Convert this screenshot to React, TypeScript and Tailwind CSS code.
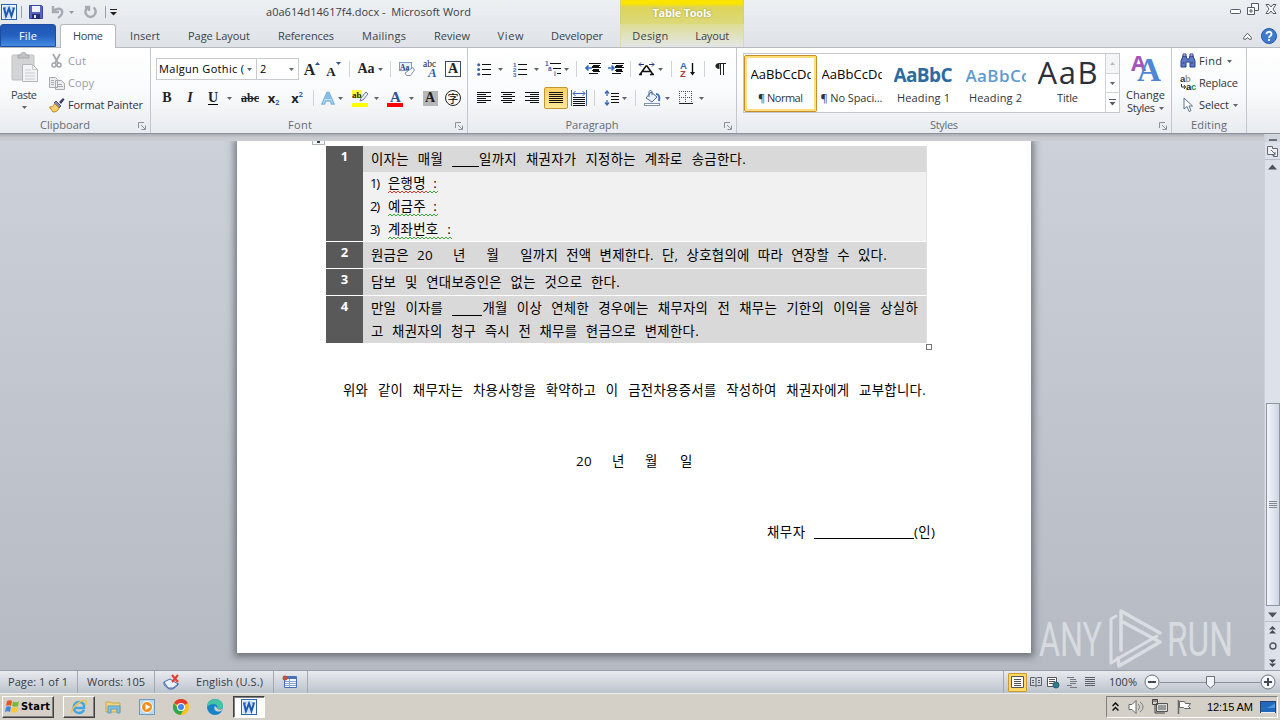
import React, { useLayoutEffect, useRef } from "react";

/* Text set to an exact measure by adjusting letter or word spacing. */
function Fit({ w, className = "", by = "letter", children }: { w: number; className?: string; by?: "letter" | "word"; children: React.ReactNode }) {
  const ref = useRef<HTMLSpanElement>(null);
  useLayoutEffect(() => {
    const el = ref.current;
    if (!el) return;
    el.style.letterSpacing = by === "letter" ? "0px" : "";
    el.style.wordSpacing = "";
    const natural = el.getBoundingClientRect().width;
    const text = el.textContent || "";
    if (by === "word") {
      const n = (text.match(/[ \u00a0]/g) || []).length || 1;
      el.style.wordSpacing = `${(w - natural) / n}px`;
    } else {
      el.style.letterSpacing = `${(w - natural) / Math.max(1, text.length - 1)}px`;
    }
  }, [w, by]);
  return (
    <span className={`inline-block shrink-0 whitespace-pre ${className}`} style={{ width: w }}>
      <span ref={ref} className="inline-block">{children}</span>
    </span>
  );
}

const Arrow = ({ className = "" }: { className?: string }) => (
  <svg className={`shrink-0 ${className}`} width="5" height="3" viewBox="0 0 5 3"><path d="M0 0h5L2.5 3z" fill="#5f646c" /></svg>
);

const Cell = ({ className = "", children }: { className?: string; children?: React.ReactNode }) => (
  <div className={`flex h-[22px] shrink-0 items-center justify-center ${className}`}>{children}</div>
);
const Sep = ({ className = "" }: { className?: string }) => (
  <Cell className={className}><div className="h-4 w-px bg-[#d0d4da]" /></Cell>
);

const I = ({ w = 16, h = 16, children, className = "" }: { w?: number; h?: number; children: React.ReactNode; className?: string }) => (
  <svg className={`shrink-0 ${className}`} width={w} height={h} viewBox={`0 0 ${w} ${h}`} fill="none">{children}</svg>
);

const Launcher = () => (
  <I w={8} h={8}><path d="M.5 6V.5H6M3 3l4 4M7.500 3.500v4h-4" stroke="#8b9099" /></I>
);

function Group({ label, w, lw, className, launcher = true, children }: { label: string; w: number; lw: string; className: string; launcher?: boolean; children: React.ReactNode }) {
  return (
    <section className={`flex h-full shrink-0 flex-col border-r border-[#c3c7cd] ${className}`}>
      <div className="h-[68px] shrink-0">{children}</div>
      <div className="flex h-[17px] shrink-0 items-center text-[11px] text-[#656b76]">
        <div className={`flex justify-center pt-[2px] ${lw}`}><Fit w={w}>{label}</Fit></div>
        {launcher && <div className="ml-auto mr-1 pt-0.5"><Launcher /></div>}
      </div>
    </section>
  );
}

const WordIcon = ({ className = "" }: { className?: string }) => (
  <I className={className}>
    <rect x=".5" y=".5" width="15" height="15" fill="#eef5fd" stroke="#2d62ad" />
    <path d="M2 2h9v12H2z" fill="#cfe1f6" />
    <path d="M3 4l2 8 3-7.500L10.500 12 13 4" stroke="#1c5bb0" strokeWidth="2" />
    <path d="M2 4h3M11 4h3" stroke="#1c5bb0" />
  </I>
);

const lineRows = (rows: number[][]) => rows.map(([x, y, w], i) => <rect key={i} x={x} y={y} width={w} height="1" fill="#111" />);

const Lines = ({ kind }: { kind: "left" | "center" | "right" | "full" }) => {
  const rows = [0, 1, 2, 3, 4, 5].map((i) => {
    const w = kind === "full" ? 14 : i % 2 ? 9 : 14;
    return [kind === "right" ? 14 - w : kind === "center" ? Math.floor((14 - w) / 2) : 0, i * 2, w];
  });
  return <I w={14} h={12}>{lineRows(rows)}</I>;
};

function TitleBar() {
  return (
    <header className="flex h-6 items-center bg-gradient-to-b from-[#edf0f3] to-[#e5e9ed]">
      <div className="flex h-6 w-[200px] items-center pl-[1px]">
        <WordIcon />
        <div className="ml-1 h-3 w-px bg-[#9ba1a9]" />
        <I className="ml-[7px]" w={14} h={14}>
          <path d="M.5.5h12l1 1v12H.5z" fill="#5663c2" stroke="#3c46a0" />
          <path d="M3 1h8v6H3z" fill="#f1f3ff" /><path d="M3 9h8v5H3z" fill="#27306f" /><path d="M5 10h2v3H5z" fill="#e2e6ff" />
        </I>
        <I className="ml-[8px]" w={13} h={14}><path d="M2 1v6h6M2.500 6.500C5 3 10 3 11 6s-1 5-4 7" stroke="#a6abb2" strokeWidth="2.400" /></I>
        <Arrow className="ml-[5px] opacity-60" />
        <I className="ml-[10px]" w={13} h={14}><path d="M9.500 2.500C12 4 12.500 8 10 10.500S3.500 12 2 9s0-5 2-6.500M1 2h4v4" stroke="#a6abb2" strokeWidth="2.400" /></I>
        <div className="ml-[8px] h-3 w-px bg-[#9ba1a9]" />
        <I className="ml-[4px]" w={7} h={8}><path d="M0 1.500h7" stroke="#222" /><path d="M0 4h7L3.500 7.500z" fill="#222" /></I>
      </div>
      <div className="flex w-[420px] pl-[66px] text-[11px] text-[#3b3f47]"><Fit w={205}>a0a614d14617f4.docx -  Microsoft Word</Fit></div>
      <div className="flex h-6 w-[124px] items-center justify-center border-x border-[#d5d36c] bg-[linear-gradient(#fce500_0px,#fbe300_4px,#dcd45a_7px,#dcd97c_100%)] pt-[3px] text-[11px] font-bold text-white [text-shadow:0_0_2px_#8d8a35]">
        <Fit w={59}>Table Tools</Fit>
      </div>
      <div className="ml-auto flex items-center gap-[6px] pb-[6px] pr-[3px]">
        <I w={12} h={12}><rect x="1.500" y="6.500" width="10" height="4" rx="1" fill="#fff" stroke="#565c66" /></I>
        <I w={12} h={12}><path d="M4.500.5h7v7h-7z" fill="#fff" stroke="#565c66" /><path d="M.5 4.500h7v7h-7z" fill="#fff" stroke="#565c66" /><path d="M3 7h2v2H3z" stroke="#565c66" /></I>
        <I w={12} h={12}><path d="M1 1.500h3l2 2.500 2-2.500h3L8 6l3 4.500H8L6 8l-2 2.500H1L4 6z" fill="#fff" stroke="#565c66" /></I>
      </div>
    </header>
  );
}

function Tabs() {
  const tab = "flex h-full items-center justify-center pt-px";
  return (
    <nav className="flex h-6 border-b border-[#b6babf] bg-gradient-to-b from-[#e5e9ed] to-[#dfe3e7] text-[11px] text-[#3d424b]">
      <div className="flex h-[23px] w-14 items-center justify-center rounded-t-[3px] border border-[#1d4da0] bg-gradient-to-b from-[#2056b4] via-[#2560bf] to-[#458be4] pt-px text-white"><Fit w={18}>File</Fit></div>
      <div className="ml-1 flex h-6 w-14 items-center justify-center rounded-t-[3px] border border-b-0 border-[#b6babf] bg-white"><Fit w={30}>Home</Fit></div>
      <div className={`${tab} w-[58px]`}><Fit w={30}>Insert</Fit></div>
      <div className={`${tab} w-[90px]`}><Fit w={62}>Page Layout</Fit></div>
      <div className={`${tab} w-[84px]`}><Fit w={56}>References</Fit></div>
      <div className={`${tab} w-[72px]`}><Fit w={44}>Mailings</Fit></div>
      <div className={`${tab} w-16`}><Fit w={36}>Review</Fit></div>
      <div className={`${tab} w-[53px]`}><Fit w={26}>View</Fit></div>
      <div className={`${tab} w-20`}><Fit w={52}>Developer</Fit></div>
      <div className="ml-[3px] flex h-[23px] w-[124px] border-x border-[#dcdba5] bg-gradient-to-b from-[#dfdd92] to-[#e2e6e6] pt-px">
        <div className="flex w-[61px] items-center justify-center"><Fit w={36}>Design</Fit></div>
        <div className="flex w-[66px] items-center justify-center pl-[2px]"><Fit w={34}>Layout</Fit></div>
      </div>
      <div className="ml-auto flex items-center gap-[9px] pr-[3px]">
        <I w={9} h={8}><path d="M.7 5.500L4.500 1.200l3.800 4.300v1.700H6L4.500 5.500 3 7.200H.7z" fill="#fff" stroke="#5d636d" /></I>
        <I><circle cx="8" cy="8" r="7.500" fill="#3e7bd0" stroke="#2558a8" /><path d="M5.500 6.200C5.500 3 10.500 3 10.500 6c0 2-2.500 2-2.500 4M8 11v2" stroke="#fff" strokeWidth="1.800" /></I>
      </div>
    </nav>
  );
}

function Clipboard() {
  return (
    <Group label="Clipboard" w={50} lw="w-[130px]" className="w-[151px]">
      <div className="flex text-[11px]">
        <div className="flex w-12 flex-col items-center pt-[4px] text-[#3b3f47]">
          <I w={28} h={32}>
            <rect x="2" y="3" width="22" height="25" rx="1" fill="#d3d4d6" stroke="#bebfc2" />
            <path d="M8 6V3h3c0-4 5-4 5 0h3v3z" fill="#c2c3c6" stroke="#a6a8ab" />
            <path d="M12.500 12.500h10l5 5v12h-15z" fill="#f3f3f5" stroke="#b4b6bb" /><path d="M22.500 12.500v5h5M15 18h6M15 21h10M15 24h10M15 27h10" stroke="#c8cace" />
          </I>
          <div className="mt-[3px] flex h-4 items-center"><Fit w={26}>Paste</Fit></div>
          <Arrow className="mt-[3px]" />
        </div>
        <div className="flex flex-col pl-[1px] pt-[2px] text-[#989ca2]">
          <div className="flex h-[22px] items-center gap-[3px]"><I><path d="M4 1l5 9M11 1L6 10" stroke="#a2a5aa" strokeWidth="1.700" /><circle cx="5" cy="12" r="2" stroke="#a2a5aa" strokeWidth="1.500" /><circle cx="10" cy="12" r="2" stroke="#a2a5aa" strokeWidth="1.500" /></I><Fit w={18}>Cut</Fit></div>
          <div className="flex h-[22px] items-center gap-[3px]"><I><path d="M.5 2.500h6l2 2v8h-8zM6.500 5.500h6l3 3v6h-9z" fill="#ececee" stroke="#a8abb0" /><path d="M2 5.500h3M2 7.500h3M2 9.500h3M8 9.500h5M8 11.500h6" stroke="#a8abb0" /></I><Fit w={26}>Copy</Fit></div>
          <div className="flex h-[22px] items-center gap-[3px] text-[#30343b]"><I><path d="M10 5l4-4 1.500 1.500L12 7z" fill="#3f3c68" /><path d="M7 4l5 5-2 2-5-5z" fill="#8b84ae" stroke="#534f7c" /><path d="M5.500 6.500L10 11c-1 3-3 4-6 4L.5 10C3 10 5 9 5.500 6.500z" fill="#f4cf65" stroke="#b98b2b" /></I><Fit w={75}>Format Painter</Fit></div>
        </div>
      </div>
    </Group>
  );
}

const serif = "font-['Liberation_Serif',serif] font-bold leading-none text-[#222]";

function FontGroup() {
  return (
    <Group label="Font" w={24} lw="w-[298px]" className="w-[317px]">
      <div className="pl-[5px] pt-[10px]">
        <div className="flex h-[22px] items-center">
          <div className="flex h-[22px] w-[101px] items-center justify-between border border-[#c7cbd1] bg-white px-[2px] pr-[4px] text-[11px] text-black"><Fit w={85}>Malgun Gothic (</Fit><Arrow /></div>
          <div className="flex h-[22px] w-[42px] items-center justify-between border border-l-0 border-[#c7cbd1] bg-white pl-[3px] pr-[4px] text-[11px] text-black"><span>2</span><Arrow /></div>
          <Cell className={`ml-[3px] w-5 text-[16px] ${serif}`}><span className="pt-[2px]">A</span><I w={5} h={16}><path d="M0 4l2.500-3L5 4z" fill="#2e4f9b" /></I></Cell>
          <Cell className={`w-[23px] text-[13px] ${serif}`}><span className="pt-[4px]">A</span><I w={5} h={16}><path d="M0 1h5L2.500 4z" fill="#2e4f9b" /></I></Cell>
          <Sep className="w-2" />
          <Cell className={`w-[34px] gap-[3px] text-[14px] ${serif}`}>Aa<Arrow /></Cell>
          <Sep className="w-1.5" />
          <Cell className="ml-[2px] w-6"><I><rect x=".5" y="1.500" width="12" height="8" fill="#e9f0fb" stroke="#7d9ccd" /><text x="1" y="8.500" fontSize="7.500" fontWeight="700" fill="#223c75" fontFamily="Liberation Serif">Aa</text><path d="M14 6.500l1.500 2.500-4 5.500H7.500L6 12z" fill="#fff" stroke="#7f8fb4" /></I></Cell>
          <Cell className="w-[23px]"><I h={18}><text x="0" y="7" fontSize="9.500" fill="#222" fontFamily="Liberation Serif">abc</text><text x="5" y="17" fontSize="13" fontWeight="700" fontStyle="italic" fill="#315fb5" fontFamily="Liberation Serif">A</text></I></Cell>
          <Cell className="w-[22px]"><div className={`flex h-4 w-4 items-center justify-center border border-[#3c4c68] text-[14px] ${serif}`}>A</div></Cell>
        </div>
        <div className="mt-[7px] flex h-[22px] items-center">
          <Cell className={`w-[22px] text-[14px] ${serif}`}>B</Cell>
          <Cell className={`w-6 text-[14px] italic ${serif}`}>I</Cell>
          <Cell className={`w-9 gap-[9px] text-[14px] ${serif}`}><span className="border-b border-black leading-[12px]">U</span><Arrow /></Cell>
          <Cell className={`w-6 text-[12px] line-through ${serif}`}>abc</Cell>
          <Cell className="w-[23px] text-[13px] font-bold leading-none text-[#222]">x<span className="pt-2 text-[7px] text-[#2d5eb5]">2</span></Cell>
          <Cell className="w-6 text-[13px] font-bold leading-none text-[#222]">x<span className="pb-2 text-[7px] text-[#2d5eb5]">2</span></Cell>
          <Sep className="w-2" />
          <Cell className="w-[30px] gap-[3px]"><I w={14} h={14}><path d="M1 13L6 1.500h2L13 13h-2.500l-1-3h-5l-1 3zM5.300 7.500h3.400L7 3.500z" fill="#e4f2fd" stroke="#79b4e3" strokeWidth="1.500" /></I><Arrow /></Cell>
          <Cell className="w-[36px] gap-[5px]"><I w={17} h={17}><rect width="10" height="8" fill="#ffff38" /><text x="0" y="7.500" fontSize="9" fontWeight="700" fill="#222" fontFamily="Liberation Serif">ab</text><path d="M14 2l2 2-5 6-3 1 1-3z" fill="#e9eef7" stroke="#6e7d99" /><rect y="13" width="16" height="4" fill="#ff0" /></I><Arrow /></Cell>
          <Cell className="w-[35px] gap-[5px]"><I w={17} h={17}><text x="3" y="12" fontSize="15" fontWeight="700" fill="#2b5295" fontFamily="Liberation Serif">A</text><rect y="13" width="16" height="4" fill="#f00" /></I><Arrow /></Cell>
          <Cell className="w-6"><div className={`flex h-[15px] w-[15px] items-center justify-center bg-[#b7b7b7] text-[14px] ${serif}`}>A</div></Cell>
          <Cell className="w-[22px]"><div className="flex h-4 w-4 items-center justify-center rounded-full border border-[#222] font-['Noto_Sans_CJK_SC',sans-serif] text-[11px] leading-none text-black">字</div></Cell>
        </div>
      </div>
    </Group>
  );
}

const Indent = ({ out = false }: { out?: boolean }) => (
  <I w={16} h={14}>
    {lineRows([[4, 1, 12], [8, 3, 7], [8, 5, 8], [8, 7, 6], [8, 9, 7], [4, 11, 9]])}
    <path d="M8 1h2v1H8zM7 4h7v2H7zM7 8h7v1H7z" fill="#111" />
    <path d={out ? "M7 6H1M3.500 3.500L1 6l2.500 2.500" : "M0 6h6M3.500 3.500L6 6 3.500 8.500"} stroke="#3569bd" strokeWidth="1.600" />
  </I>
);

function Paragraph() {
  return (
    <Group label="Paragraph" w={53} lw="w-[248px]" className="w-[269px]">
      <div className="pl-[4px] pt-[10px]">
        <div className="flex h-[22px] items-center">
          <Cell className="w-9 gap-[6px]"><I w={15} h={13}>{lineRows([[5, 1, 9], [5, 6, 9], [5, 11, 9]])}<circle cx="1.700" cy="1.700" r="1.500" fill="#3765ac" /><circle cx="1.700" cy="6.500" r="1.500" fill="#3765ac" /><circle cx="1.700" cy="11.300" r="1.500" fill="#3765ac" /></I><Arrow /></Cell>
          <Cell className="w-[35px] gap-[6px]"><I w={15} h={15}>{lineRows([[5, 2, 9], [5, 7, 9], [5, 12, 9]])}<g fill="#3765ac" fontSize="6" fontWeight="700" fontFamily="Liberation Sans"><text y="4.500">1</text><text y="9.500">2</text><text y="14.500">3</text></g></I><Arrow /></Cell>
          <Cell className="w-7 gap-[2px]"><I w={17} h={16}>{lineRows([[5, 2, 11], [8, 7, 8], [12, 12, 4]])}<g fill="#3765ac" fontSize="6.500" fontWeight="700" fontFamily="Liberation Sans"><text x="0" y="5">1</text><text x="3" y="10">a</text><text x="9" y="15">i</text></g></I><Arrow /></Cell>
          <Sep className="w-2.5" />
          <Cell className="w-6"><Indent out /></Cell>
          <Cell className="w-[21px]"><Indent /></Cell>
          <Sep className="w-2" />
          <Cell className="w-[33px] gap-[3px]"><I w={17} h={14}><path d="M2 12.500L8 4h1l6 8.500M5 9.500h7M1 12.500h3M12 12.500h4" stroke="#111" strokeWidth="1.600" /><path d="M1 2.500h5M1 2.500L3 .5M1 2.500l2 2M16 2.500h-5M16 2.500L14 .5M16 2.500l-2 2" stroke="#24368c" /></I><Arrow /></Cell>
          <Sep className="w-2" />
          <Cell className="w-[25px]"><I><text x="0" y="7.500" fontSize="9.500" fontWeight="700" fill="#3565ae" fontFamily="Liberation Sans">A</text><text x="0" y="15.500" fontSize="9.500" fontWeight="700" fill="#b23b3b" fontFamily="Liberation Sans">Z</text><path d="M12.500 2v11" stroke="#111" strokeWidth="1.400" /><path d="M10 11h5l-2.500 3.500z" fill="#111" /></I></Cell>
          <Sep className="w-2" />
          <Cell className="w-6"><I w={11} h={12}><path d="M4.500 0C-1 0-1 6 4.500 6z" fill="#222" /><path d="M4 .5h7M5.500 1v11M8.500 1v11" stroke="#222" /></I></Cell>
        </div>
        <div className="mt-[7px] flex h-[22px] items-center">
          <Cell className="w-6"><Lines kind="left" /></Cell>
          <Cell className="w-6"><Lines kind="center" /></Cell>
          <Cell className="w-6"><Lines kind="right" /></Cell>
          <Cell className="w-6 rounded-[2px] border border-[#c29530] bg-gradient-to-b from-[#fbd064] to-[#fee797]"><Lines kind="full" /></Cell>
          <Cell className="w-[22px]"><I>{lineRows([[2, 7, 12], [2, 9, 12], [2, 11, 12], [2, 13, 12], [2, 15, 12]])}<path d="M.5 0v16M15.500 0v16M2 3.500h12M4.500 1L2 3.500 4.500 6M11.500 1L14 3.500 11.500 6" stroke="#3a66ad" /></I></Cell>
          <Sep className="w-2" />
          <Cell className="w-[34px] gap-[2px]"><I h={16}>{lineRows([[7, 3, 8], [7, 6, 8], [7, 9, 8], [7, 12, 8]])}<path d="M3 1v5M1 3.500L3 1l2 2.500M3 10v5M1 12.500L3 15l2-2.500" stroke="#3569bd" strokeWidth="1.300" /></I><Arrow /></Cell>
          <Sep className="w-1.5" />
          <Cell className="w-[38px] gap-[4px]"><I w={17}><path d="M7 2l6 5-5 5-6-4z" fill="#eaf1fb" stroke="#4d6795" /><path d="M5 7V2c0-2 3-2 3 0v3" stroke="#4d6795" /><path d="M12 4c3 0 4 3 3 7" stroke="#3a6fc0" strokeWidth="2" /><rect x=".5" y="13.500" width="15" height="2" fill="#fff" stroke="#7c91b5" /></I><Arrow /></Cell>
          <Cell className="w-[30px] gap-[6px]"><I w={14} h={14}><path d="M.5 0v13M6.500 0v13M12.500 0v13M0 .5h13M0 6.500h13" stroke="#555" strokeDasharray="1 1" /><path d="M0 12.500h14" stroke="#222" /></I><Arrow /></Cell>
        </div>
      </div>
    </Group>
  );
}

function StyleCard({ label, w, children, active = false }: { label: string; w: number; children: React.ReactNode; active?: boolean }) {
  return (
    <div className={`mr-[-1px] flex h-[57px] w-[73px] shrink-0 flex-col items-center border ${active ? "rounded-[2px] border-[#c98e2b] bg-white shadow-[inset_0_0_0_2px_#ffdf7c]" : "border-transparent pr-[2px]"}`}>
      <div className="flex h-[34px] w-[60px] items-center overflow-hidden">{children}</div>
      <div className="flex h-[16px] items-center text-[11px] text-[#30343b]"><Fit w={w}>{label}</Fit></div>
    </div>
  );
}

function Styles() {
  return (
    <Group label="Styles" w={28} lw="w-[414px]" className="w-[435px]">
      <div className="flex pl-[6px] pt-[5px]">
        <div className="flex h-[60px] w-[377px] border border-[#c5c9cf] bg-white pt-px">
          <StyleCard label="¶ Normal" w={45} active><Fit w={64} className="pt-[4px] text-[13px] text-black">AaBbCcDd</Fit></StyleCard>
          <StyleCard label="¶ No Spaci..." w={62}><Fit w={64} className="pt-[4px] text-[13px] text-black">AaBbCcDd</Fit></StyleCard>
          <StyleCard label="Heading 1" w={53}><Fit w={59} className="pt-[5px] text-[19px] font-bold text-[#2e6a9f]">AaBbC</Fit></StyleCard>
          <StyleCard label="Heading 2" w={53}><Fit w={64} className="pt-[5px] text-[17px] font-semibold text-[#5f9bd0]">AaBbCc</Fit></StyleCard>
          <StyleCard label="Title" w={21}><Fit w={60} className="pb-[2px] text-[31px] leading-[34px] text-[#2c303b]">AaB</Fit></StyleCard>
          <div className="ml-auto flex h-[58px] w-[14px] -translate-y-px flex-col border-l border-[#d0d4d9]">
            <div className="flex flex-1 items-center justify-center bg-[#f4f5f7]"><Arrow className="rotate-180 opacity-40" /></div>
            <div className="flex flex-1 items-center justify-center border-y border-[#d0d4d9]"><Arrow /></div>
            <div className="flex flex-1 items-center justify-center"><I w={7} h={7}><path d="M0 .5h7" stroke="#555b64" /><path d="M.5 3h6L3.500 6.500z" fill="#555b64" /></I></div>
          </div>
        </div>
        <div className="flex w-[51px] flex-col items-center text-[11px] text-[#30343b]">
          <I w={30} h={29}>
            <g fontFamily="Open Sans" fontWeight="700"><text x="0" y="18" fontSize="22" fill="#a355b8" textLength="15" lengthAdjust="spacingAndGlyphs">A</text></g>
            <g fontFamily="Liberation Serif" fontWeight="700"><text x="6" y="28" fontSize="34" fill="#4d87d6" textLength="24" lengthAdjust="spacingAndGlyphs">A</text></g>
          </I>
          <div className="mt-[7px] flex h-3 items-center"><Fit w={39}>Change</Fit></div>
          <div className="mt-px flex h-3 items-center gap-[4px]"><Fit w={28}>Styles</Fit><Arrow /></div>
        </div>
      </div>
    </Group>
  );
}

function Editing() {
  return (
    <Group label="Editing" w={36} lw="w-[74px]" className="w-[75px]" launcher={false}>
      <div className="flex flex-col pl-[8px] pt-[2px] text-[11px] text-[#30343b]">
        <div className="flex h-[22px] items-center gap-[3px]"><I><path d="M1 8l2-5h3l1 3h2l1-3h3l2 5v6h-5V9H6v5H1z" fill="#5c79c3" stroke="#293f86" /><path d="M3 4V1h3v3M10 4V1h3v3M2.500 10h2M11 10h2" stroke="#293f86" /></I><Fit w={23}>Find</Fit><Arrow className="ml-[2px]" /></div>
        <div className="flex h-[22px] items-center gap-[3px]"><I><g fontSize="9.500" fontWeight="700" fontFamily="Liberation Sans"><text y="7" fill="#333">a</text><text x="5" y="7" fill="#999">b</text><text x="6" y="15" fill="#222">a</text><text x="11" y="15" fill="#26903b">c</text></g><path d="M1.500 9v3h4M4 10l1.500 2L4 14" stroke="#333" /></I><Fit w={39}>Replace</Fit></div>
        <div className="flex h-[22px] items-center gap-[3px]"><I><path d="M4 1v11l3-2.500 2 5 2-1-2-4.500h3.500z" fill="#fff" stroke="#5b7498" /></I><Fit w={30}>Select</Fit><Arrow className="ml-px" /></div>
      </div>
    </Group>
  );
}

const kr = "font-['Open_Sans','Noto_Sans_CJK_KR',sans-serif] text-[13.4px] tracking-[0.3px] text-black";
const Blank = ({ className }: { className: string }) => <span className={`inline-block h-[3px] translate-y-[3px] border-b border-black align-baseline ${className}`} />;
const Gap = ({ className }: { className: string }) => <span className={`inline-block ${className}`} />;
const Wave = ({ w, color }: { w: number; color: string }) => (
  <svg width={w} height="3" viewBox={`0 0 ${w} 3`} fill="none">
    <path d={"M0 2" + Array.from({ length: Math.ceil(w / 4) }, () => "l2-2l2 2").join("")} stroke={color} />
  </svg>
);

function ListItem({ n, text, w, red = 0 }: { n: string; text: string; w: number; red?: number }) {
  return (
    <div className="flex h-[23px]">
      <Fit w={10} className="mr-2 text-[13px] leading-[23px]">{n}</Fit>
      <div className="flex h-[22px] flex-col">
        <div className="flex h-[19px] items-center pt-[4px]"><Fit w={w - 1} by="word">{text}</Fit></div>
        <div className="flex h-[3px]">{red > 0 && <Wave w={red} color="#e03a2e" />}<Wave w={w - red} color="#3aa53a" /></div>
      </div>
    </div>
  );
}

function TableRow({ n, rowClass, children }: { n: string; rowClass: string; children: React.ReactNode }) {
  return (
    <div className={`flex ${rowClass}`}>
      <div className="flex w-[37px] justify-center bg-[#595959] pt-[2px] text-[13px] font-bold leading-[16px] text-white">{n}</div>
      <div className="flex-1">{children}</div>
    </div>
  );
}

function Document() {
  const line = "flex h-[23px] items-center pt-[2px]";
  const single = "flex h-[26px] items-center bg-[#d9d9d9] pb-px pl-2 pt-[2px] leading-[19px]";
  return (
    <main className="flex h-[536px] overflow-hidden bg-gradient-to-b from-[#cdd1d9] to-[#b6bbc3]">
      <div className="flex flex-1 flex-col">
        <div className="h-[7px] shrink-0 bg-gradient-to-b from-[#abafb5] via-[#c5c9ce] to-[#cbcfd4]" />
        <div className="flex h-[529px] overflow-hidden pl-[237px]">
          <article className={`h-[512px] w-[794px] bg-white shadow-[0_1px_7px_3px_rgba(75,80,88,0.65)] ${kr}`}>
            <div className="flex h-[5px] pl-[75px]"><div className="flex h-[4px] w-[13px] justify-center border border-t-0 border-[#b0b4bd] bg-[#f4f6fb]"><div className="h-[2px] w-[3px] bg-[#33425f]" /></div></div>
            <div className="ml-[89px] w-[601px] border-r border-[#e0e0e0]">
              <TableRow n="1" rowClass="h-[95px]">
                <div className={single}><Fit w={375} by="word">이자는 매월 <Blank className="w-[27px]" />일까지 채권자가 지정하는 계좌로 송금한다.</Fit></div>
                <div className="h-[69px] bg-[#f1f1f1] pl-[7px]">
                  <ListItem n="1)" text="은행명 :" w={50} red={40} />
                  <ListItem n="2)" text="예금주 :" w={50} />
                  <ListItem n="3)" text="계좌번호 :" w={64} />
                </div>
              </TableRow>
              <TableRow n="2" rowClass="mt-px h-[26px]"><div className={single}><Fit w={516} by="word">원금은 20<Gap className="w-[20px]" />년<Gap className="w-[21px]" />월<Gap className="w-[21px]" />일까지 전액 변제한다. 단, 상호협의에 따라 연장할 수 있다.</Fit></div></TableRow>
              <TableRow n="3" rowClass="mt-px h-[26px]"><div className={single}><Fit w={249} by="word">담보 및 연대보증인은 없는 것으로 한다.</Fit></div></TableRow>
              <TableRow n="4" rowClass="mt-px h-[47px]">
                <div className="h-full bg-[#d9d9d9] pl-2">
                  <div className={line}><Fit w={547} by="word">만일 이자를 <Blank className="w-[30px]" />개월 이상 연체한 경우에는 채무자의 전 채무는 기한의 이익을 상실하</Fit></div>
                  <div className={line}><Fit w={328} by="word">고 채권자의 청구 즉시 전 채무를 현금으로 변제한다.</Fit></div>
                </div>
              </TableRow>
            </div>
            <div className="flex h-[7px] items-end pl-[689px]"><div className="h-[6px] w-[6px] border border-[#777] bg-white" /></div>
            <div className={`${line} mt-[28px] pl-[106px]`}><Fit w={583} by="word">위와 같이 채무자는 차용사항을 확약하고 이 금전차용증서를 작성하여 채권자에게 교부합니다.</Fit></div>
            <div className={`${line} mt-[48px] pl-[339px]`}><Fit w={36} by="word">20 </Fit><span className="w-[33px]">년</span><span className="w-[35px]">월</span><span>일</span></div>
            <div className={`${line} mt-[48px] pl-[530px]`}><Fit w={38}>채무자</Fit><div className="ml-[9px] mt-[12px] h-px w-[100px] bg-black" /><Fit w={21}>(인)</Fit></div>
          </article>
          <div className="mt-auto ml-[8px] flex h-[66px] items-center">
            <svg width="193" height="64" viewBox="0 0 193 64" fill="none">
              <g fill="#dde1e6" fillOpacity=".85" fontFamily="Roboto" fontSize="49" fontWeight="400">
                <text x="0" y="51" textLength="63" lengthAdjust="spacingAndGlyphs">ANY</text>
                <text x="128" y="51" textLength="66" lengthAdjust="spacingAndGlyphs">RUN</text>
              </g>
              <g stroke="#dde1e6" strokeOpacity=".9" strokeWidth="3.500" strokeLinejoin="round" strokeLinecap="round">
                <path d="M121 28L82 6v39" /><path d="M84 17l37 20-41 24-1-8" /><path d="M77 11l-5 3v44l8-5 38-22" strokeWidth="3" />
              </g>
            </svg>
          </div>
        </div>
      </div>
      <aside className="flex w-4 flex-col items-center border-l border-[#cbd0d8] bg-[#dce1ea]">
        <div className="flex h-[8px] w-full items-center justify-center bg-[#d0d4db]"><div className="mt-1 h-[2px] w-2 bg-[#6c717a]" /></div>
        <I className="mt-[2px]" w={14} h={14}><path d="M1.500 2.500h5v2h5v8h-4v-2h-6z" fill="#eef0f4" stroke="#656b75" /><path d="M5 6l4 4M9 8v3H6" stroke="#656b75" /></I>
        <div className="mt-[1px] h-px w-full bg-[#b9bec7]" />
        <I className="mt-[4px]" w={9} h={6}><path d="M4.500.5L9 5.500H0z" fill="#4e535d" /></I>
        <div className="mt-[233px] flex h-[203px] w-[14px] flex-col items-center justify-center gap-px border border-[#8f96a1] bg-gradient-to-r from-[#f3f5f8] via-[#e2e7f0] to-[#cfd6e2]">
          <I w={8} h={8}><path d="M0 .5h8M0 2.500h8M0 4.500h8M0 6.500h8" stroke="#848a95" /></I>
        </div>
        <I className="mt-[6px]" w={9} h={6}><path d="M0 .5h9L4.500 5.500z" fill="#4e535d" /></I>
        <div className="mt-[3px] h-px w-full bg-[#b9bec7]" />
        <I className="mt-[4px]" w={7} h={8}><path d="M3.500 0L7 3.500H0zM3.500 4L7 7.500H0z" fill="#454b55" /></I>
        <I className="mt-[8px]" w={8} h={8}><circle cx="4" cy="4" r="3" stroke="#50565f" strokeWidth="1.400" /></I>
        <I className="mt-[9px]" w={7} h={8}><path d="M0 .5h7L3.500 4zM0 4.500h7L3.500 8z" fill="#454b55" /></I>
      </aside>
    </main>
  );
}

const Divider = () => <div className="h-[22px] w-px shrink-0 bg-[#a3a9b3]" />;

function StatusBar() {
  return (
    <footer className="flex h-6 items-center border-b border-t border-b-[#eceef1] border-t-[#989ea7] bg-gradient-to-b from-[#e8ebef] to-[#bdc3cd] text-[11px] text-[#373c45]">
      <div className="w-[77px] pl-2"><Fit w={60}>Page: 1 of 1</Fit></div><Divider />
      <div className="w-[76px] pl-[9px]"><Fit w={58}>Words: 105</Fit></div><Divider />
      <div className="w-[41px] pl-2"><I w={17}><path d="M1 8l6-3 8 5-5 4H5z" fill="#eaf0fb" stroke="#496fab" /><path d="M1 8v3l5 4h4l5-4v-2" stroke="#496fab" /><path d="M9 1l6 7M15 1L9 8" stroke="#e13d31" strokeWidth="2" /></I></div>
      <div className="w-[77px]"><Fit w={67}>English (U.S.)</Fit></div><Divider />
      <div className="flex w-[33px] justify-center pr-[2px]"><I w={16} h={14}><path d="M2.500 1.500h12v11h-12z" fill="#f5f8ff" stroke="#4a70b8" /><path d="M3 2h11v2H3z" fill="#4a70b8" /><path d="M3 6.500h11M3 8.500h11M3 10.500h11M7.500 4v8" stroke="#8aa5d7" /><circle cx="3" cy="3" r="2.500" fill="#b9553b" /></I></div><Divider />
      <div className="ml-auto flex items-center pr-[4px]">
        <div className="mr-[4px]"><Divider /></div>
        <div className="flex h-[19px] w-[19px] items-center justify-center rounded-[1px] border border-[#c99a2c] bg-[#ffd968]"><I w={13} h={12}><path d="M.5.5h12v11H.5z" fill="#fff" stroke="#555" /><path d="M3 3.500h7M3 5.500h7M3 7.500h7M3 9.500h7" stroke="#555" /></I></div>
        <I className="ml-[3px]" w={12} h={12}><path d="M.5 1.500h4l1.500 1 1.500-1h4v8h-4L6 10.500l-1.500-1h-4zM6 2v8M2 4.500h2M2 6.500h2M8 4.500h2M8 6.500h2" stroke="#5b6069" /></I>
        <I className="ml-[5px]" w={13} h={13}><path d="M.5 1.500h9v9h-9z" fill="#fff" stroke="#555" /><path d="M2 3.500h6M2 5.500h6M2 7.500h4" stroke="#555" /><circle cx="9" cy="9" r="3" fill="#347d7b" stroke="#25588d" /></I>
        <I className="ml-[7px]" w={10} h={11}><path d="M0 .5h7M3 2.500h6M3 4.500h7M3 6.500h6M0 8.500h5M3 10.500h7" stroke="#747a84" /></I>
        <I className="ml-[8px]" w={11} h={10}><path d="M0 .5h10M0 2.500h10M0 4.500h10M0 6.500h10M0 8.500h10" stroke="#5b6069" /></I>
        <div className="ml-[13px]"><Fit w={28}>100%</Fit></div>
        <I className="ml-[7px]"><circle cx="8" cy="8" r="7" fill="#f6f7f9" stroke="#6d737d" /><path d="M4 8h8" stroke="#444a54" strokeWidth="2" /></I>
        <I w={100} h={16}><path d="M0 8.500h100" stroke="#8b919b" /><path d="M46.500 2.500h8v8l-4 3.500-4-3.500z" fill="#f3f5f8" stroke="#6d737d" /></I>
        <I><circle cx="8" cy="8" r="7" fill="#f6f7f9" stroke="#6d737d" /><path d="M4 8h8M8 4v8" stroke="#444a54" strokeWidth="2" /></I>
      </div>
    </footer>
  );
}

function Taskbar() {
  return (
    <footer className="flex h-[26px] items-center bg-[#d4d0c8] font-['Liberation_Sans',sans-serif] text-[11px] text-black">
      <button className="ml-[2px] flex h-[22px] w-[52px] items-center border border-b-[#404040] border-l-white border-r-[#404040] border-t-white pl-[2px] font-['DejaVu_Sans_Condensed','DejaVu_Sans',sans-serif] font-bold shadow-[inset_-1px_-1px_#808080]">
        <I w={15} h={14}><path d="M2 1c2-1 4-1 5 0L6 6c-2-1-3-1-5 0z" fill="#e95527" /><path d="M8 1.500c2 1 4 1 6 0L13 6c-2 1-4 1-6 0z" fill="#78b83c" /><path d="M1 7c2-1 3-1 5 0l-1 5c-2-1-3-1-5 0z" fill="#4387d8" /><path d="M7 7c2 1 4 1 6 0l-1 5c-2 1-4 1-6 0z" fill="#f8c832" /></I>
        <Fit w={29} className="ml-px">Start</Fit>
      </button>
      <div className="ml-[9px] flex h-[22px] w-8 items-center justify-center border border-b-[#404040] border-l-white border-r-[#404040] border-t-white shadow-[inset_-1px_-1px_#808080]">
        <I><path d="M13 11c-1 2-3 3-5 3-7 0-7-11 0-11 4 0 6 3 5 6H4" stroke="#43a5df" strokeWidth="2.500" /><path d="M1 14C-1 10 11-1 15 2c1 1 0 3-1 4" stroke="#eac449" strokeWidth="1.500" /></I>
      </div>
      <I className="ml-[10px]" w={17}><path d="M1 3h5l1 1h8v9H1z" fill="#efd47a" stroke="#c9a84c" /><path d="M3 7h12v7h-3v-4H6v4H3z" fill="#7ebfdf" stroke="#5a9ec6" /></I>
      <I className="ml-[17px]"><rect x=".5" y=".5" width="15" height="15" fill="#b9daf1" stroke="#6d9cc2" /><circle cx="8" cy="8" r="5.500" fill="#f28c1b" stroke="#fff" /><path d="M6.500 5l5 3-5 3z" fill="#fff" /></I>
      <I className="ml-[18px]"><circle cx="8" cy="8" r="8" fill="#fbc116" /><path d="M8 8L1 4a8 8 0 0114 0z" fill="#e33b2e" /><path d="M1 4a8 8 0 006.500 12L11 10 5 9.500z" fill="#2da94f" /><circle cx="8" cy="8" r="4" fill="#fff" /><circle cx="8" cy="8" r="3" fill="#4285f4" /></I>
      <I className="ml-[18px]"><circle cx="8" cy="8" r="8" fill="#1683c8" /><path d="M0 8C0-2 16-2 16 7c0 4-5 4-6 2 2-4-5-6-10-1z" fill="#42c4a5" /><path d="M10 9c1 2 4 2 6 0-1 4-4 4-7 3-2-1-2-4-1-5z" fill="#d4d0c8" /></I>
      <div className="ml-[10px] flex h-[22px] w-8 items-center justify-center border border-b-white border-l-[#404040] border-r-white border-t-[#404040] bg-white shadow-[inset_1px_1px_#808080]"><WordIcon /></div>
      <div className="ml-auto mr-[2px] flex h-[22px] w-[172px] items-center border border-b-white border-l-[#808080] border-r-white border-t-[#808080] pl-[5px]">
        <I w={7} h={10}><path d="M.5 4l3-3 3 3M.5 8.500l3-3 3 3" stroke="#111" strokeWidth="1.500" /></I>
        <I className="ml-[9px]" w={17}><path d="M1 5.500h3l4-4v13l-4-4H1z" fill="#fff" stroke="#666" /><path d="M10 5c2 2 2 4 0 6M12 3c4 3 4 7 0 10" stroke="#777" /></I>
        <I className="ml-[7px]"><path d="M4.500 4.500h11v8h-11z" fill="#ddd" stroke="#555" /><path d="M6 6h8v5H6z" fill="#999" /><path d="M.5.5h5v5h-5zM3 5v9h10M2 0v3M4 0v3" stroke="#444" /></I>
        <I className="ml-[8px]"><path d="M2.500 1v14" stroke="#666" strokeWidth="1.500" /><path d="M3.500 2.500h5l1 2h5l-2 3 2 2h-6l-1-1h-4z" fill="#fff" stroke="#666" /></I>
        <Fit w={46} className="ml-[15px]">12:15 AM</Fit>
        <I className="ml-[7px]" w={16} h={14}><rect x=".5" y="1.500" width="15" height="11" fill="#2168bd" stroke="#28426e" /><path d="M1 8c5 1 9-1 14-5v5H1z" fill="#4f97dc" /><path d="M1 12.500h14" stroke="#e8eef7" /></I>
      </div>
    </footer>
  );
}

export default function App() {
  return (
    <div className="flex h-[720px] w-[1280px] select-none flex-col overflow-hidden bg-[#cdd1d9] font-['Open_Sans','Noto_Sans',sans-serif] leading-normal">
      <TitleBar />
      <Tabs />
      <div className="flex h-[86px] shrink-0 border-b border-[#8c9299] bg-gradient-to-b from-white via-[#fafbfc] to-[#e8ebef]">
        <Clipboard />
        <FontGroup />
        <Paragraph />
        <Styles />
        <Editing />
      </div>
      <Document />
      <StatusBar />
      <Taskbar />
    </div>
  );
}
